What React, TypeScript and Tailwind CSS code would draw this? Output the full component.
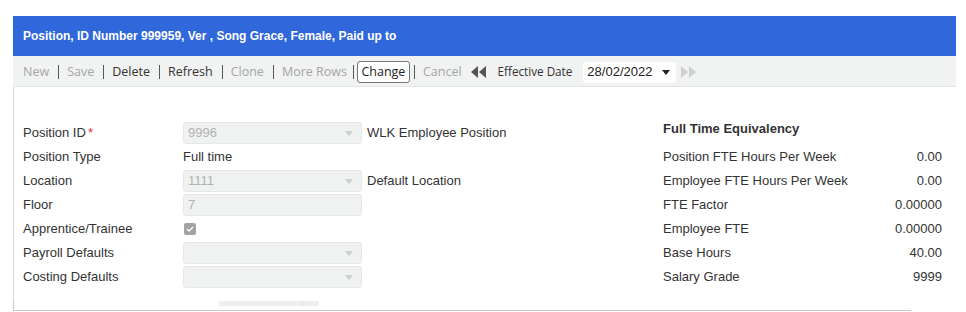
import React from "react";

const FONT = { fontFamily: "'Liberation Sans', Arial, sans-serif" };
const BAR_FONT = { fontFamily: "'Open Sans', 'Segoe UI', sans-serif" };

type Tool = { label: string; enabled?: boolean; boxed?: boolean };

const tools: Tool[] = [
  { label: "New" },
  { label: "Save" },
  { label: "Delete", enabled: true },
  { label: "Refresh", enabled: true },
  { label: "Clone" },
  { label: "More Rows" },
  { label: "Change", enabled: true, boxed: true },
  { label: "Cancel" },
];

const fte = [
  { label: "Position FTE Hours Per Week", value: "0.00" },
  { label: "Employee FTE Hours Per Week", value: "0.00" },
  { label: "FTE Factor", value: "0.00000" },
  { label: "Employee FTE", value: "0.00000" },
  { label: "Base Hours", value: "40.00" },
  { label: "Salary Grade", value: "9999" },
];

function Caret({ className }: { className: string }) {
  return (
    <svg width="8" height="5" viewBox="0 0 8 5" className={className}>
      <path d="M0 0h8L4 5z" fill="currentColor" />
    </svg>
  );
}

function Select({ value }: { value?: string }) {
  return (
    <div className="flex h-[22px] w-[179px] items-center justify-between rounded-[3px] border border-[#e6e7e7] bg-[#f0f1f1] pl-[4px] pr-[8px] text-[13px] text-[#b3b3b3]">
      <span>{value}</span>
      <Caret className="text-[#cfd0d0]" />
    </div>
  );
}

function Row({ label, children }: { label: React.ReactNode; children?: React.ReactNode }) {
  return (
    <div className="flex h-[24px] items-center">
      <div className="w-[160px] text-[13px] text-[#333]">{label}</div>
      {children}
    </div>
  );
}

export default function App() {
  return (
    <div className="h-[312px] w-[966px] overflow-hidden bg-white pt-[16px] pl-[13px]" style={FONT}>
      <div className="w-[943px]">
        <div className="flex h-[40px] items-center bg-[#3067db] pl-[10px] text-[12px] font-bold text-white">
          Position, ID Number 999959, Ver , Song Grace, Female, Paid up to
        </div>

        <div className="flex h-[31px] items-center border-b border-[#e3e4e4] bg-[#f1f2f2] pl-[10px] pt-[2px] text-[12.5px]" style={BAR_FONT}>
          {tools.map((t, i) => (
            <React.Fragment key={t.label}>
              {i > 0 && (
                <span
                  className={
                    t.boxed
                      ? "ml-[6px] mr-[3px] h-[14px] w-px bg-[#555]"
                      : tools[i - 1].boxed
                        ? "ml-[4px] mr-[8px] h-[14px] w-px bg-[#555]"
                        : "ml-[9px] mr-[8px] h-[14px] w-px bg-[#555]"
                  }
                />
              )}
              {t.boxed ? (
                <span className="flex h-[22px] w-[53px] items-center justify-center rounded-[3px] border border-[#777] bg-white text-[#222]">
                  {t.label}
                </span>
              ) : (
                <span className={t.enabled ? "text-[#333]" : "text-[#a6a6a6]"}>{t.label}</span>
              )}
            </React.Fragment>
          ))}
          <span className="ml-[9px] flex text-[#555]">
            <svg width="16" height="12" viewBox="0 0 16 12">
              <path d="M0 6L7 0v12zM8 6l7-6v12z" fill="currentColor" />
            </svg>
          </span>
          <span className="ml-[11px] text-[11.7px] text-[#333]">Effective Date</span>
          <div className="ml-[11px] flex h-[21px] w-[93px] items-center justify-between rounded-[3px] bg-white pl-[4px] pr-[6px] text-[13px] text-[#222]" style={FONT}>
            <span>28/02/2022</span>
            <Caret className="text-[#222]" />
          </div>
          <span className="ml-[5px] flex text-[#cfd0d0]">
            <svg width="15" height="12" viewBox="0 0 15 12">
              <path d="M7 6L0 0v12zM15 6L8 0v12z" fill="currentColor" />
            </svg>
          </span>
        </div>

        <div className="h-[214px] overflow-hidden border-l border-[#dcdcdc] pl-[9px] pt-[34px]">
          <div className="flex">
            <div className="w-[640px]">
              <Row
                label={
                  <>
                    Position ID<span className="ml-[2px] text-[#e0303b]">*</span>
                  </>
                }
              >
                <Select value="9996" />
                <span className="ml-[5px] text-[13px] text-[#333]">WLK Employee Position</span>
              </Row>
              <Row label="Position Type">
                <span className="text-[13px] text-[#333]">Full time</span>
              </Row>
              <Row label="Location">
                <Select value="1111" />
                <span className="ml-[5px] text-[13px] text-[#333]">Default Location</span>
              </Row>
              <Row label="Floor">
                <div className="flex h-[22px] w-[179px] items-center rounded-[3px] border border-[#e6e7e7] bg-[#f0f1f1] pl-[4px] text-[13px] text-[#b3b3b3]">
                  7
                </div>
              </Row>
              <Row label="Apprentice/Trainee">
                <span className="ml-[1px] flex h-[12px] w-[12px] items-center justify-center rounded-[2px] bg-[#a3a3a3]">
                  <svg width="8" height="6" viewBox="0 0 8 6">
                    <path d="M1 3l2 2 4-4" stroke="white" strokeWidth="1.4" fill="none" />
                  </svg>
                </span>
              </Row>
              <Row label="Payroll Defaults">
                <Select />
              </Row>
              <Row label="Costing Defaults">
                <Select />
              </Row>
            </div>

            <div className="w-[279px]">
              <div className="flex h-[24px] items-center text-[13px] font-bold text-[#333]">
                <span className="-mt-[8px]">Full Time Equivalency</span>
              </div>
              {fte.map((r) => (
                <div key={r.label} className="flex h-[24px] items-center justify-between text-[13px] text-[#333]">
                  <span>{r.label}</span>
                  <span>{r.value}</span>
                </div>
              ))}
            </div>
          </div>
        </div>

        <div className="flex h-[10px] w-[898px] border-b border-l border-[#c8c8c8]">
          <div className="ml-[205px] flex h-[5px] w-[100px] bg-[#eeeeee]">
            <div className="ml-[83px] h-full w-px bg-[#dddddd]" />
          </div>
        </div>
      </div>
    </div>
  );
}
